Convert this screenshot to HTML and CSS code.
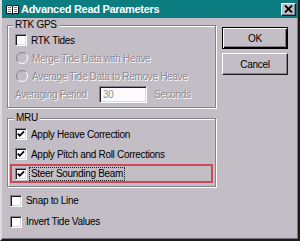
FILE: index.html
```html
<!DOCTYPE html>
<html>
<head>
  <meta charset="utf-8" />
  <title>Advanced Read Parameters</title>
  <meta name="viewport" content="width=device-width, initial-scale=1">
  <link rel="stylesheet" href="styles.css">
</head>
<body>
  <div class="window">
    <div class="titlebar">
      <svg class="app-icon" width="13" height="11" viewBox="0 0 13 11">
        <path d="M0.5 1.5 H5 L6.5 2.5 L8 1.5 H12.5 V9.5 H8 L6.5 10.5 L5 9.5 H0.5 Z" fill="#fff" stroke="#101018"/>
        <path d="M6.5 2.5 V10" stroke="#101018"/>
        <path d="M2 3.5 H5 M2 5.5 H5 M8 3.5 H11 M8 5.5 H11 M2 7.5 H5 M8 7.5 H11" stroke="#6a7890"/>
      </svg>
      <span class="title">Advanced Read Parameters</span>
      <span class="close-btn">
        <svg width="9" height="8" viewBox="0 0 9 8">
          <path d="M1 0.5 L8 7.5 M8 0.5 L1 7.5" stroke="#000" stroke-width="1.8"/>
        </svg>
      </span>
    </div>

    <div class="content">
      <div class="left">
        <fieldset class="group group-rtk">
          <legend>RTK GPS</legend>
          <div class="row rtk-row">
            <span class="check"></span>
            <span>RTK Tides</span>
          </div>
          <div class="row rtk-row disabled">
            <svg class="radio" width="12" height="12" viewBox="0 0 12 12">
              <circle cx="6" cy="6" r="5" fill="#c3bec6"/>
              <path d="M2.1 9.9 A5.5 5.5 0 0 1 9.9 2.1" fill="none" stroke="#85808a"/>
              <path d="M9.9 2.1 A5.5 5.5 0 0 1 2.1 9.9" fill="none" stroke="#fff"/>
            </svg>
            <span>Merge Tide Data with Heave</span>
          </div>
          <div class="row rtk-row disabled">
            <svg class="radio" width="12" height="12" viewBox="0 0 12 12">
              <circle cx="6" cy="6" r="5" fill="#c3bec6"/>
              <path d="M2.1 9.9 A5.5 5.5 0 0 1 9.9 2.1" fill="none" stroke="#85808a"/>
              <path d="M9.9 2.1 A5.5 5.5 0 0 1 2.1 9.9" fill="none" stroke="#fff"/>
            </svg>
            <span>Average Tide Data to Remove Heave</span>
          </div>
          <div class="row period-row disabled">
            <span class="period-label">Averaging Period</span>
            <span class="field">30</span>
            <span class="unit">Seconds</span>
          </div>
        </fieldset>

        <fieldset class="group group-mru">
          <legend>MRU</legend>
          <div class="row mru-row">
            <span class="check">
              <svg width="8" height="8" viewBox="0 0 8 8"><path d="M0.8 3.6 L2.8 5.8 L7 1.4" fill="none" stroke="#000" stroke-width="1.8"/></svg>
            </span>
            <span>Apply Heave Correction</span>
          </div>
          <div class="row mru-row">
            <span class="check">
              <svg width="8" height="8" viewBox="0 0 8 8"><path d="M0.8 3.6 L2.8 5.8 L7 1.4" fill="none" stroke="#000" stroke-width="1.8"/></svg>
            </span>
            <span>Apply Pitch and Roll Corrections</span>
          </div>
          <div class="row highlight">
            <span class="check check-focus">
              <svg width="8" height="8" viewBox="0 0 8 8"><path d="M0.8 3.6 L2.8 5.8 L7 1.4" fill="none" stroke="#000" stroke-width="1.8"/></svg>
            </span>
            <span class="focus">Steer Sounding Beam</span>
          </div>
        </fieldset>

        <div class="row loose-row first">
          <span class="check"></span>
          <span>Snap to Line</span>
        </div>
        <div class="row loose-row">
          <span class="check"></span>
          <span>Invert Tide Values</span>
        </div>
      </div>

      <div class="buttons">
        <div class="btn btn-default">OK</div>
        <div class="btn">Cancel</div>
      </div>
    </div>
  </div>
</body>
</html>
```

FILE: styles.css
```css
html, body {
  margin: 0px;
  padding: 0px;
}
body {
  font-family: "Liberation Sans", Arial, sans-serif;
  font-size: 10px;
  letter-spacing: -0.3px;
  color: #000;
  background: #c3bec6;
}
.window {
  width: 300px;
  height: 241px;
  box-sizing: border-box;
  display: flex;
  flex-direction: column;
  background: #c3bec6;
  border-left: 2px solid #dcd8de;
  border-right: 2px solid #1c1a1e;
  border-bottom: 2px solid #1c1a1e;
  box-shadow: inset -1px -1px 0 #7a7680;
}
.titlebar {
  height: 18px;
  flex: none;
  display: flex;
  align-items: center;
  padding: 0 2px 0 2px;
  background: #0b7c7f;
  color: #fff;
  font-weight: bold;
  font-size: 11px;
}
.app-icon {
  margin-left: 2px;
  margin-right: 2px;
  flex: none;
}
.close-btn {
  margin-left: auto;
  width: 15px;
  height: 13px;
  box-sizing: border-box;
  display: flex;
  align-items: center;
  justify-content: center;
  background: #c3bec6;
  border: 1px solid;
  border-color: #fff #1c1a1e #1c1a1e #fff;
  box-shadow: inset -1px -1px 0 #85808a;
}

.content {
  flex: 1;
  display: flex;
  padding-left: 5px;
}
.left {
  width: 209px;
  flex: none;
}
.row {
  display: flex;
  align-items: center;
  white-space: nowrap;
}

/* group boxes */
.group {
  margin: 0;
  min-width: 0;
  border: 1px solid #85808a;
  box-shadow: 1px 1px 0 #fff, inset 1px 1px 0 #fff;
}
.group legend {
  padding: 0 2px;
  line-height: 12px;
  background: #c3bec6;
}
.group-rtk {
  margin-top: 1px;
  padding: 0 0 4px 7px;
}
.group-rtk legend {
  margin-left: -2px;
}
.rtk-row {
  height: 18px;
}
.period-row {
  height: 18px;
}
.period-label {
  width: 84px;
}
.field {
  width: 48px;
  height: 17px;
  box-sizing: border-box;
  display: flex;
  align-items: center;
  padding-left: 3px;
  background: #fcfafc;
  border: 1px solid;
  border-color: #85808a #fff #fff #85808a;
  box-shadow: inset 1px 1px 0 #1c1a1e, inset -1px -1px 0 #dcd8de;
  text-shadow: none;
}
.unit {
  margin-left: 7px;
}

.group-mru {
  margin-top: 4px;
  padding: 0 2px 3px 2px;
}
.group-mru legend {
  margin-left: 4px;
}
.mru-row {
  height: 20px;
  padding-left: 5px;
}
.highlight {
  height: 19px;
  box-sizing: border-box;
  border: 2px solid #cc4a58;
  padding-left: 3px;
}
.focus {
  border: 1px dotted #222;
  padding: 0 1px;
  line-height: 12px;
}

.loose-row {
  height: 21px;
  padding-left: 3px;
}
.loose-row.first {
  margin-top: 3px;
}

/* controls */
.check {
  width: 12px;
  height: 12px;
  box-sizing: border-box;
  flex: none;
  display: flex;
  align-items: center;
  justify-content: center;
  margin-right: 4px;
  background: #fff;
  border: 1px solid;
  border-color: #85808a #fff #fff #85808a;
  box-shadow: inset 1px 1px 0 #1c1a1e, inset -1px -1px 0 #dcd8de;
}
.check-focus {
  margin-right: 2px;
}
.radio {
  flex: none;
  margin-left: 1px;
  margin-right: 4px;
}
.disabled {
  color: #8e8a93;
  text-shadow: 1px 1px 0 #fff;
}

/* buttons */
.buttons {
  margin-left: 6px;
  padding-top: 9px;
  display: flex;
  flex-direction: column;
  gap: 4px;
}
.btn {
  width: 66px;
  height: 22px;
  box-sizing: border-box;
  display: flex;
  align-items: center;
  justify-content: center;
  border: 1px solid;
  border-color: #fff #1c1a1e #1c1a1e #fff;
  box-shadow: inset -1px -1px 0 #85808a;
}
.btn-default {
  border-color: #000;
  box-shadow: inset 1px 1px 0 #fff, inset -1px -1px 0 #000, inset -2px -2px 0 #85808a;
}
```
